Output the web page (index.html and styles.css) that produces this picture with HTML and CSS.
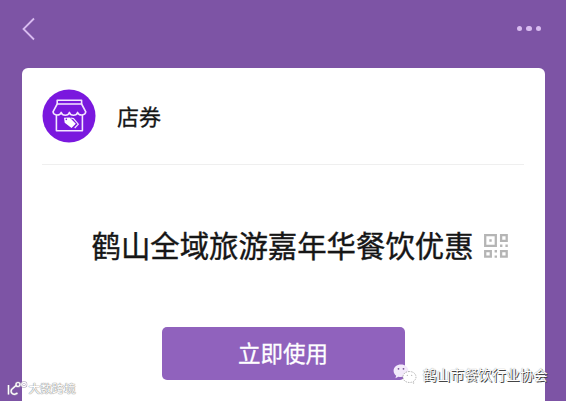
FILE: index.html
```html
<!DOCTYPE html>
<html lang="zh-CN">
<head>
  <meta charset="UTF-8" />
  <meta name="viewport" content="width=device-width, initial-scale=1" />
  <title>店券</title>
  <link rel="stylesheet" href="styles.css">
</head>
<body>
  <header class="top-bar">
    <svg class="back" width="14" height="24" viewBox="0 0 14 24">
      <path d="M12 1.5 L1.5 12 L12 22.5" />
    </svg>
    <div class="more"><span></span><span></span><span></span></div>
  </header>

  <main class="card">
    <div class="shop">
      <svg class="shop-logo" width="54" height="54" viewBox="0 0 54 54">
        <circle cx="27" cy="27" r="26.5" fill="#7a18de" />
        <g fill="none" stroke="#f3e6ff" stroke-width="1.6" stroke-linejoin="round">
          <path d="M15.2 11.2h24.4v3.8H15.2z" />
          <path d="M15.2 15L11 22.8c.3 4 7 4.3 8.2.6c1.2 3.7 7 3.7 8.2 0c1.2 3.7 7 3.7 8.2 0c1.2 3.7 7.9 3.4 8.2-.6L39.6 15" />
          <path d="M14.4 26v15.7h26V26" />
        </g>
        <path d="M28.500 29l3 .6 4.800 5.600-3.600 3.800" fill="none" stroke="#f3e6ff" stroke-width="1.2" />
        <path fill="#fff" fill-rule="evenodd" d="M22 28.800l5.600-.2 6.200 6.200-4.300 4.300-6.800-5.300zM24.300 29.600a.8.8 0 1 0 .1 1.600a.8.8 0 0 0-.1-1.600z" />
      </svg>
      <span class="shop-name">店券</span>
    </div>

    <div class="coupon">
      <h1>鹤山全域旅游嘉年华餐饮优惠</h1>
      <svg class="qr" width="24" height="24" viewBox="0 0 24 24">
        <g fill="none" stroke="#b5b5b5" stroke-width="2.3">
          <path d="M1.2 1.2h10.6v10.6H1.2z" />
          <path d="M17.1 1.2h5.6v5.6h-5.6z" />
          <path d="M1.2 17.1h5.6v5.6H1.2z" />
          <path d="M17.1 17.1h5.6v5.6h-5.6z" />
        </g>
        <path fill="#b5b5b5" d="M5.3 5.3h2.4v2.4H5.3zM16 10.6h2.4V13H16zM21.4 10.6h2.4V13h-2.4zM10.6 16H13v2.4h-2.4zM10.6 21.4H13v2.4h-2.4z" />
      </svg>
    </div>

    <button class="use-button">立即使用</button>
  </main>

  <div class="mark mark-left">
    <svg width="22" height="17" viewBox="0 0 22 17">
      <g class="mark-outline">
        <path d="M2.500 5v9.500M10 5.500L5.500 9.500c-1.500 3.500 2 6.500 6 3.500" />
        <circle cx="12" cy="4.500" r="2" />
        <circle cx="18" cy="4.500" r="2.200" />
      </g>
      <g class="mark-fill">
        <path d="M2.500 5v9.500M10 5.500L5.500 9.500c-1.500 3.500 2 6.500 6 3.500" />
        <circle cx="12" cy="4.500" r="2" />
        <circle cx="18" cy="4.500" r="2.200" />
      </g>
    </svg>
    <span>大数跨境</span>
  </div>

  <div class="mark mark-right">
    <svg width="24" height="21" viewBox="0 0 24 21">
      <path d="M8 .6C3.700.6.600 3.300.600 6.800c0 2 1 3.700 2.600 4.900l-.8 2.500 3-1.500c.9.300 1.700.300 2.600.300 4.200 0 7.400-2.700 7.400-6.200S12.200.6 8 .6z" fill="#f3eafb" />
      <path d="M16.500 7.500c-3.800 0-6.600 2.300-6.600 5.500s2.800 5.500 6.600 5.500c.8 0 1.500-.1 2.200-.3l2.300 1.200-.6-2c1.600-1 2.600-2.600 2.600-4.400 0-3.200-2.800-5.500-6.500-5.500z" fill="#fff" stroke="#999" stroke-width=".7" stroke-dasharray="1.5 1" />
      <g fill="#765094">
        <circle cx="5.500" cy="4.800" r=".9" />
        <circle cx="10.500" cy="4.800" r=".9" />
      </g>
      <g fill="#aaa">
        <circle cx="14.300" cy="11.300" r=".6" />
        <circle cx="18.700" cy="11.300" r=".6" />
      </g>
    </svg>
    <span>鹤山市餐饮行业协会</span>
  </div>
</body>
</html>
```

FILE: styles.css
```css
* {
  box-sizing: border-box;
}

body {
  margin: 0;
  height: 401px;
  overflow: hidden;
  position: relative;
  display: flex;
  flex-direction: column;
  background: #7d54a5;
  color: #161616;
  font-family: "Noto Sans CJK SC", sans-serif;
}

.top-bar {
  height: 68px;
  padding: 17px 25px 0 22px;
  display: flex;
  justify-content: space-between;
  align-items: flex-start;
}

.back {
  fill: none;
  stroke: #d9bcf0;
  stroke-width: 1.8;
}

.more {
  display: flex;
  gap: 4px;
  padding-top: 9px;
}

.more span {
  width: 5.4px;
  height: 5.4px;
  border-radius: 50%;
  background: #d9bcf0;
}

.card {
  flex: 1;
  margin: 0 21.5px;
  background: #fff;
  border-radius: 6px 6px 0 0;
}

.shop {
  height: 97px;
  margin: 0 21px 0 20.5px;
  display: flex;
  align-items: center;
  gap: 21px;
  border-bottom: 1px solid #efefef;
}

.shop-name {
  font-size: 22px;
  line-height: 30px;
  padding-bottom: 3px;
  -webkit-text-stroke: 0.3px;
}

.coupon {
  height: 162px;
  padding-left: 70px;
  display: flex;
  align-items: center;
  gap: 10px;
}

h1 {
  margin: 0;
  padding-bottom: 4px;
  font-size: 29.4px;
  line-height: 40px;
  font-weight: 400;
  white-space: nowrap;
  -webkit-text-stroke: 0.4px;
}

.use-button {
  display: block;
  width: 243px;
  height: 53px;
  margin-left: 140px;
  padding: 0 0 4px;
  border: 0;
  border-radius: 5px;
  background: #9062bd;
  color: #fff;
  font-family: inherit;
  font-size: 22.5px;
  -webkit-text-stroke: 0.3px;
}

/* watermarks over the card */
.mark {
  position: absolute;
  display: flex;
  align-items: center;
  white-space: nowrap;
}

.mark-left {
  left: 5.5px;
  top: 379px;
  gap: 1px;
  color: #fff;
  font-size: 11.8px;
  line-height: 18px;
  text-shadow: 0 0 1px #888, 0 0 1px #999, 0 0 1px #aaa;
}

.mark-outline {
  fill: none;
  stroke: #a99bb8;
  stroke-width: 2.2;
}

.mark-fill {
  fill: none;
  stroke: #fff;
  stroke-width: 1.2;
}

.mark-right {
  left: 392.5px;
  top: 363px;
  gap: 6px;
  color: #fff;
  font-size: 13.9px;
  line-height: 22px;
  text-shadow: 1px 1px 0 #444, 0 0 1px #777;
}

.mark-right span {
  padding-bottom: 1px;
}
```
